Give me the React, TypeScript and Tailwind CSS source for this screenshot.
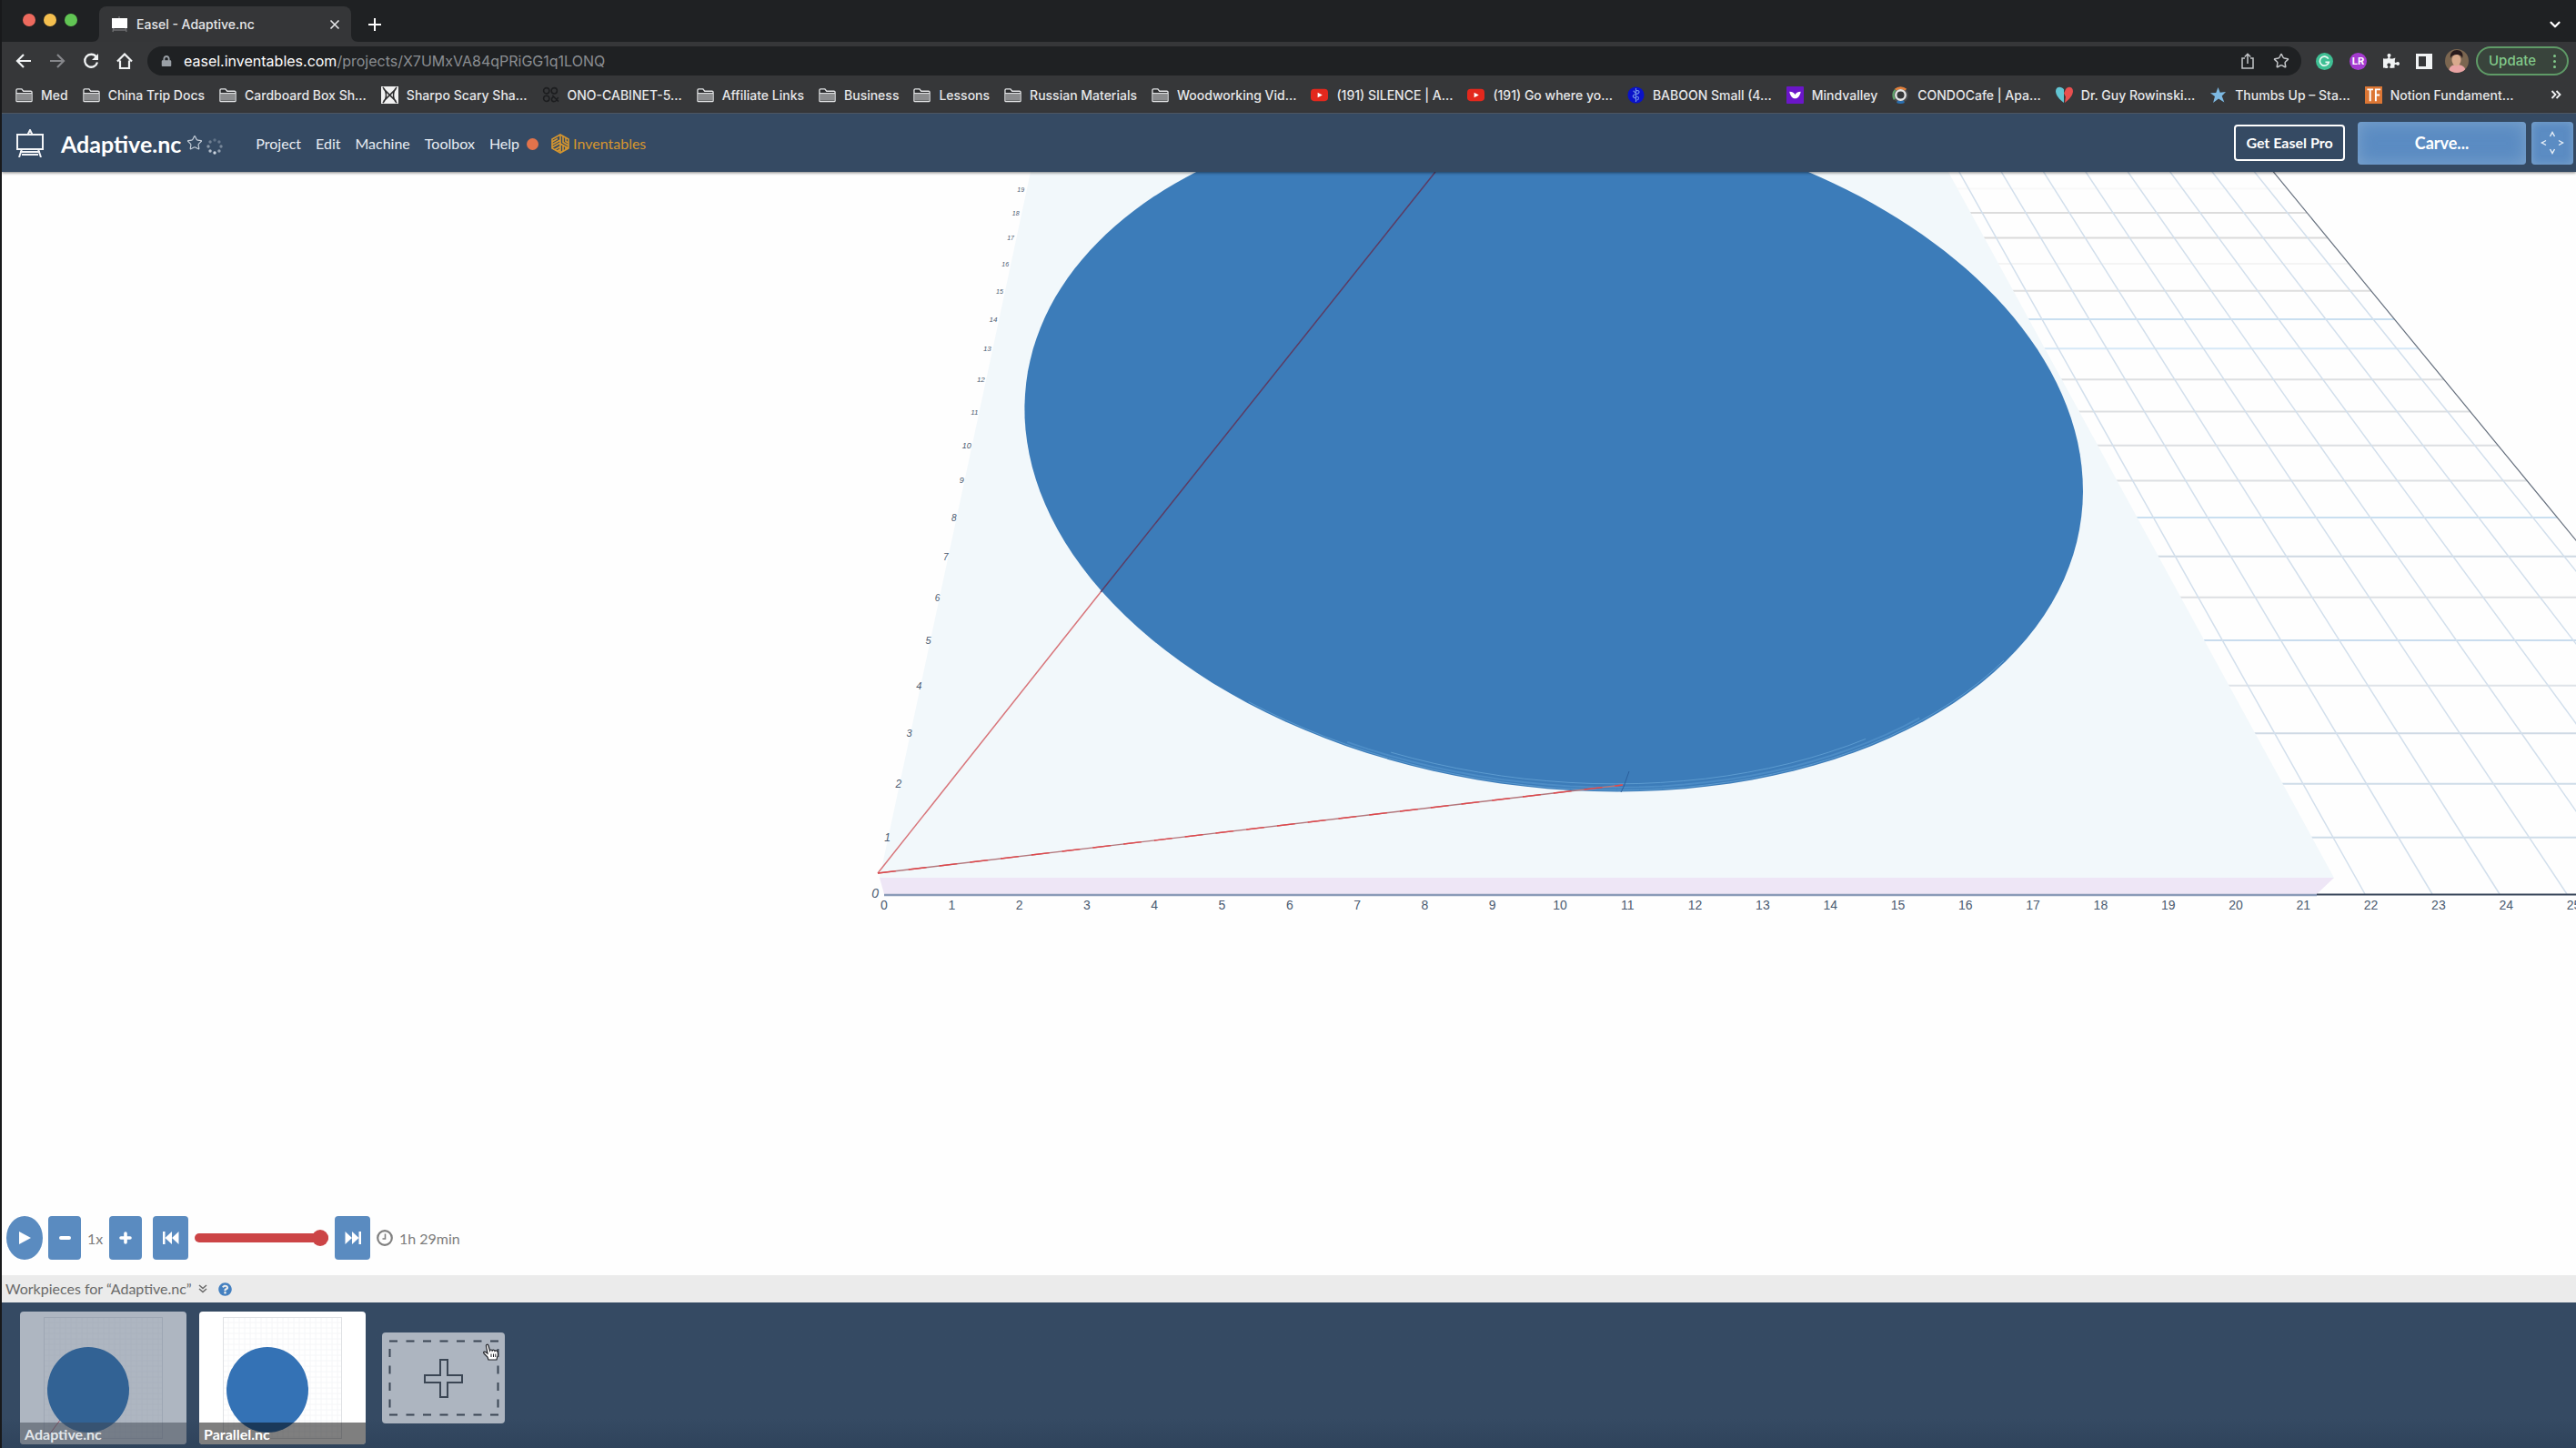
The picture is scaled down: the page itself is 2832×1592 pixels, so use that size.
/**
 * @fileoverview Easel project page shown inside a browser window.
 */

import React from 'react';
import { FaPuzzlePiece, FaLock, FaQuestionCircle } from 'react-icons/fa';
import { ChevronDown, Star } from 'lucide-react';

/* ------------------------------------------------------------------ */
/* Bookmarks                                                           */
/* ------------------------------------------------------------------ */

type BookmarkKind =
  | 'folder'
  | 'sharpo'
  | 'ono'
  | 'youtube'
  | 'baboon'
  | 'mindvalley'
  | 'condo'
  | 'heart'
  | 'star'
  | 'tf';

const BOOKMARKS: { kind: BookmarkKind; label: string }[] = [
  { kind: 'folder', label: 'Med' },
  { kind: 'folder', label: 'China Trip Docs' },
  { kind: 'folder', label: 'Cardboard Box Sh...' },
  { kind: 'sharpo', label: 'Sharpo Scary Sha...' },
  { kind: 'ono', label: 'ONO-CABINET-5...' },
  { kind: 'folder', label: 'Affiliate Links' },
  { kind: 'folder', label: 'Business' },
  { kind: 'folder', label: 'Lessons' },
  { kind: 'folder', label: 'Russian Materials' },
  { kind: 'folder', label: 'Woodworking Vid...' },
  { kind: 'youtube', label: '(191) SILENCE | A...' },
  { kind: 'youtube', label: '(191) Go where yo...' },
  { kind: 'baboon', label: 'BABOON Small (4...' },
  { kind: 'mindvalley', label: 'Mindvalley' },
  { kind: 'condo', label: 'CONDOCafe | Apa...' },
  { kind: 'heart', label: 'Dr. Guy Rowinski...' },
  { kind: 'star', label: 'Thumbs Up – Sta...' },
  { kind: 'tf', label: 'Notion Fundament...' },
];

const BookmarkIcon: React.FC<{ kind: BookmarkKind }> = ({ kind }) => (
  <svg className="size-[19px] shrink-0" viewBox="0 0 20 20" aria-hidden="true">
    {kind === 'folder' && (
      <>
        <path d="M1 16.5V4.2C1 3.4 1.500 3 2.200 3h5l2 2.500h8.600c.8 0 1.200.5 1.200 1.200v9.800c0 .6-.4 1-1 1H2c-.6 0-1-.4-1-1z" fill="#2d2e30" stroke="#e4e5e7" strokeWidth="1.400" />
        <path d="M2 8.500h16v8H2z" fill="#8b8c8e" />
        <path d="M1 8h18" stroke="#e4e5e7" strokeWidth="1.200" />
      </>
    )}
    {kind === 'sharpo' && (
      <>
        <rect width="20" height="20" fill="#f1f1f1" />
        <path d="M2 1c5 5 5 13 0 18M18 1c-5 5-5 13 0 18M3 3l14 14M17 3L3 17" fill="none" stroke="#2b2b2d" strokeWidth="1.600" />
      </>
    )}
    {kind === 'ono' && (
      <g fill="none" stroke="#1c1d1f" strokeWidth="1.600">
        <circle cx="5" cy="5" r="3.300" />
        <circle cx="14" cy="5" r="3.300" />
        <circle cx="5" cy="14" r="3.300" />
        <path d="M19 17.500L12 10.500M18.500 12.500c-1 3-3 5-5 5-3 0-3.500-4-.5-5" />
      </g>
    )}
    {kind === 'youtube' && (
      <>
        <rect x="0" y="3" width="20" height="14" rx="4" fill="#e3281d" />
        <path d="M8 7l5.500 3L8 13z" fill="#fff" />
      </>
    )}
    {kind === 'baboon' && (
      <>
        <circle cx="10" cy="10" r="9.500" fill="#0a12c9" />
        <path d="M10 2v16M10 5c5-1 5 3 0 4M10 9c-5 1-4 4 0 4.500M10 12c4-1 4 3 1 4M7 5l3 3" fill="none" stroke="#6f8fe6" strokeWidth="1.200" />
      </>
    )}
    {kind === 'mindvalley' && (
      <>
        <rect width="20" height="20" rx="1" fill="#6b16c9" />
        <path d="M3.500 6c3 0 5 1 6.500 3.500C11.500 7 13.500 6 16.500 6c-.5 4-3 8-6.500 8S4 10 3.500 6z" fill="#fff" />
      </>
    )}
    {kind === 'condo' && (
      <>
        <circle cx="10" cy="10" r="9" fill="#4c4d50" />
        <path d="M4 4a9 9 0 0 1 12 0" fill="none" stroke="#e2803c" strokeWidth="3" />
        <path d="M4 4a9 9 0 0 0-1 11" fill="none" stroke="#5fa36a" strokeWidth="2.500" />
        <path d="M6 17.500a9 9 0 0 0 8 0" fill="none" stroke="#2a6fb0" strokeWidth="3" />
        <circle cx="10" cy="10" r="5.500" fill="#353638" stroke="#e6e6e6" strokeWidth="2.500" />
      </>
    )}
    {kind === 'heart' && (
      <>
        <path d="M9.500 19C4 15 0 10 0 5.500c0-6 7-6 9.500-2z" fill="#62c5d3" />
        <path d="M10.500 19C16 15 20 10 20 5.500c0-6-7-6-8.500-2L9.500 8l2 4z" fill="#e84f4f" />
      </>
    )}
    {kind === 'star' && (
      <path d="M10 1l2.300 6.200 6.700-.9-4.600 4.700 2.800 7.500-6.700-4.200L4.300 19l2-7.300L1 7.500l6.600-.2z" fill="#7db9e3" />
    )}
    {kind === 'tf' && (
      <>
        <rect width="20" height="20" fill="#dc7634" />
        <path d="M2.500 3.500h7M6 3.500v13.500M12.500 17V3.500h5.500M12.500 10H17" fill="none" stroke="#fff" strokeWidth="2" />
      </>
    )}
  </svg>
);

/* ------------------------------------------------------------------ */
/* Browser chrome                                                      */
/* ------------------------------------------------------------------ */

const TabStrip: React.FC = () => (
  <div className="flex h-[46px] items-end bg-[#1f2123] pl-[23px] pr-3.5">
    <div className="flex h-full w-[76px] items-center gap-[9px] pb-0.5">
      <button aria-label="Close window" className="size-3.5 rounded-full bg-[#ed6a5e]" />
      <button aria-label="Minimize window" className="size-3.5 rounded-full bg-[#f4bf4f]" />
      <button aria-label="Zoom window" className="size-3.5 rounded-full bg-[#61c554]" />
    </div>
    <svg className="size-2 shrink-0" viewBox="0 0 8 8" aria-hidden="true">
      <path d="M8 0v8H0c5 0 8-3 8-8z" fill="#353638" />
    </svg>
    <div className="flex h-[39px] w-[277px] items-center rounded-t-lg bg-[#353638] pl-[13px] pr-3">
      <svg className="h-[18px] w-[19px]" viewBox="0 0 19 18" aria-hidden="true">
        <path d="M3 12l-1 5M16 12l1 5M3 15h13M9 0v2" stroke="#6d6e70" strokeWidth="1.500" />
        <rect x="1" y="2" width="17" height="11" fill="#fff" />
      </svg>
      <span className="ml-[9px] flex-1 text-[14px] font-medium text-[#e6e7e9]">Easel - Adaptive.nc</span>
      <button aria-label="Close tab" className="size-3">
        <svg viewBox="0 0 12 12" stroke="#e6e7e9" strokeWidth="1.600">
          <path d="M1.500 1.500l9 9M10.500 1.500l-9 9" />
        </svg>
      </button>
    </div>
    <svg className="size-2 shrink-0" viewBox="0 0 8 8" aria-hidden="true">
      <path d="M0 0v8h8C3 8 0 5 0 0z" fill="#353638" />
    </svg>
    <button aria-label="New tab" className="mb-3 ml-[11px] size-3.5">
      <svg viewBox="0 0 14 14" stroke="#fff" strokeWidth="2">
        <path d="M7 0v14M0 7h14" />
      </svg>
    </button>
    <button aria-label="Search tabs" className="mb-2.5 ml-auto">
      <ChevronDown className="size-[18px] text-white" strokeWidth={3} />
    </button>
  </div>
);

const Toolbar: React.FC = () => (
  <div className="flex h-[42px] items-center bg-[#363739] pl-[15px] pr-2">
    <div className="flex items-center gap-[19px] text-[#e8eaed]">
      <button aria-label="Back" className="size-[18px]">
        <svg viewBox="0 0 18 18" fill="none" stroke="#f1f3f4" strokeWidth="2.200">
          <path d="M17 9H2M9 2L2 9l7 7" />
        </svg>
      </button>
      <button aria-label="Forward" className="size-[18px]">
        <svg viewBox="0 0 18 18" fill="none" stroke="#85868a" strokeWidth="2.200">
          <path d="M1 9h15M9 2l7 7-7 7" />
        </svg>
      </button>
      <button aria-label="Reload" className="size-[18px]">
        <svg viewBox="0 0 18 18" fill="none" stroke="#f1f3f4" strokeWidth="2.300">
          <path d="M14.800 4.500A7 7 0 1 0 16 10.500" />
          <path d="M17 1v7h-7z" fill="#f1f3f4" stroke="none" />
        </svg>
      </button>
      <button aria-label="Home" className="size-[18px]">
        <svg viewBox="0 0 18 18" fill="none" stroke="#f1f3f4" strokeWidth="2.200">
          <path d="M4 8.500V17h10V8.500M1 9.500L9 1.500l8 8" />
        </svg>
      </button>
    </div>
    <div className="ml-4 flex h-8 flex-1 items-center rounded-full bg-[#1f2123] pl-[15px] pr-[13px]">
      <FaLock className="size-3 text-[#9aa0a6]" />
      <a href="#address" className="ml-[13px] flex-1 text-[16px] text-[#8b8e92]">
        <span className="text-white">easel.inventables.com</span>/projects/X7UMxVA84qPRiGG1q1LONQ
      </a>
      <button aria-label="Share" className="h-[18px] w-4">
        <svg viewBox="0 0 16 18" fill="none" stroke="#c4c6c9" strokeWidth="1.500">
          <path d="M5 6H2v11h12V6h-3M8 12V1.500M4.800 4.500L8 1.300l3.200 3.200" />
        </svg>
      </button>
      <button aria-label="Bookmark this page" className="ml-5">
        <Star className="size-[18px] text-[#c4c6c9]" />
      </button>
    </div>
    <div className="ml-4 flex items-center gap-[18px]">
      <button aria-label="Grammarly" className="size-[19px]">
        <svg viewBox="0 0 20 20">
          <circle cx="10" cy="10" r="10" fill="#3fbf94" />
          <path d="M14.500 7A5.300 5.300 0 1 0 15 11h-4" fill="none" stroke="#eafaf4" strokeWidth="1.800" />
        </svg>
      </button>
      <button aria-label="LR" className="flex size-[19px] items-center justify-center rounded-full bg-[#a43bd0] text-[11px] font-bold leading-none text-white">
        LR
      </button>
      <button aria-label="Extensions">
        <FaPuzzlePiece className="size-[18px] text-[#f1f3f4]" />
      </button>
      <button aria-label="Side panel" className="flex h-[17px] w-[18px] justify-end border-[3px] border-[#f1f3f4]">
        <span className="h-full w-1 bg-[#f1f3f4]" />
      </button>
      <button aria-label="Profile" className="-ml-1 size-[26px] overflow-hidden rounded-full">
        <svg viewBox="0 0 26 26">
          <rect width="26" height="26" fill="#7b6650" />
          <path d="M4 26c0-7 4-9 9-9s10 2 10 9z" fill="#e9a3a4" />
          <ellipse cx="12.500" cy="12" rx="5" ry="6.500" fill="#d8a98d" />
          <path d="M6 10c-1-6 3-9 7-9s8 3 6 9c-1-3-3-4-6-4s-6 1-7 4z" fill="#271a1c" />
        </svg>
      </button>
    </div>
    <button className="ml-2 flex h-8 w-[102px] items-center justify-between rounded-full border-2 border-[#5f9b67] bg-[#39443c] px-3 text-[15px] font-medium text-[#82c98a]">
      Update
      <span className="flex flex-col gap-[3px]">
        <span className="size-[3px] rounded-full bg-[#82c98a]" />
        <span className="size-[3px] rounded-full bg-[#82c98a]" />
        <span className="size-[3px] rounded-full bg-[#82c98a]" />
      </span>
    </button>
  </div>
);

const BookmarksBar: React.FC = () => (
  <nav aria-label="Bookmarks" className="flex h-[37px] items-center gap-4 overflow-hidden border-b border-[#56606b] bg-[#363739] pb-1 pl-[15px] pr-4">
    {BOOKMARKS.map(({ kind, label }) => (
      <a key={label} href="#bookmark" className="flex shrink-0 items-center gap-[9px] whitespace-nowrap text-[14px] font-medium text-[#e6e7e9]">
        <BookmarkIcon kind={kind} />
        {label}
      </a>
    ))}
    <button aria-label="More bookmarks" className="ml-auto size-3">
      <svg viewBox="0 0 12 12" fill="none" stroke="#f1f3f4" strokeWidth="1.800">
        <path d="M1.500 2l4 4-4 4M6.500 2l4 4-4 4" />
      </svg>
    </button>
  </nav>
);

/* ------------------------------------------------------------------ */
/* Easel header                                                        */
/* ------------------------------------------------------------------ */

const SPINNER_OPACITY = [0.25, 0.3, 0.4, 0.55, 0.9, 0.75, 0.5, 0.35];

const EaselHeader: React.FC = () => (
  <header className="relative z-10 flex h-16 items-center bg-[#354a63] pl-4 pr-[3px] font-['Lato',sans-serif] text-[#e8edf3] shadow-[0_1px_3px_rgba(0,0,0,0.5)]">
    <svg className="h-[31px] w-[30px]" viewBox="0 0 30 31" fill="none" stroke="#f2f4f7" strokeWidth="2" aria-hidden="true">
      <path d="M1 6h28v16H1zM12.500 6L15 1l2.500 5M4 25h22M6 22l-3 9M24 22l3 9M6 28h18" />
    </svg>
    <h1 className="ml-[19px] pt-0.5 text-[25px] font-bold leading-none text-white">Adaptive.nc</h1>
    <button aria-label="Favorite" className="ml-1.5">
      <Star className="size-[18px] text-[#c6cfda]" strokeWidth={1.600} />
    </button>
    <svg className="ml-1 mt-2 size-[18px]" viewBox="0 0 18 18" aria-hidden="true">
      {SPINNER_OPACITY.map((opacity, i) => (
        <circle
          key={i}
          cx={9 + 7 * Math.sin((i * Math.PI) / 4)}
          cy={9 - 7 * Math.cos((i * Math.PI) / 4)}
          r="1.700"
          fill="#dfe6ee"
          opacity={opacity}
        />
      ))}
    </svg>
    <nav className="ml-9 flex items-center gap-4 pt-0.5 text-[16px]">
      <button>Project</button>
      <button>Edit</button>
      <button>Machine</button>
      <button>Toolbox</button>
      <button className="flex items-center gap-2">
        Help
        <span className="size-[13px] rounded-full bg-[#e2734b]" />
      </button>
      <a href="#inventables" className="-ml-0.5 flex items-center gap-1 text-[#d6962f]">
        <svg className="h-[22px] w-5" viewBox="0 0 20 22" fill="none" stroke="#d6962f" strokeWidth="1.600" aria-hidden="true">
          <path d="M10 1l9 5v10l-9 5-9-5V6z" />
          <path d="M10 1v10l9 5M10 11v10M13 2.500v7L19 13M16 4.500v4l3 1.500M1 9l6-3.500M1 12l9-5M1 15l9-5M4 17.500l6-3.500M7 19l3-2M13 13v6M16 15v3" />
        </svg>
        Inventables
      </a>
    </nav>
    <div className="ml-auto flex items-center">
      <button className="h-10 w-[122px] rounded-sm border-2 border-white text-[16px] font-bold text-white">Get Easel Pro</button>
      <button className="ml-3.5 h-[47px] w-[185px] rounded-sm bg-[#5b8cc3] text-[18px] font-bold text-white shadow-[inset_0_0_18px_rgba(160,190,215,0.5)]">
        Carve...
      </button>
      <button aria-label="Jog machine" className="ml-1.5 flex h-[47px] w-[46px] items-center justify-center rounded-sm bg-[#5b8cc3] shadow-[inset_0_0_10px_rgba(160,190,215,0.5)]">
        <svg className="size-[26px]" viewBox="0 0 26 26" fill="none" stroke="#e8eff7" strokeWidth="1.400">
          <path d="M10.500 6L13 1.500 15.500 6M10.500 20l2.500 4.500 2.500-4.500M6 10.500L1.500 13 6 15.500M20 10.500l4.500 2.500-4.500 2.500" />
        </svg>
      </button>
    </div>
  </header>
);

/* ------------------------------------------------------------------ */
/* 3D preview                                                          */
/* ------------------------------------------------------------------ */

const AXIS_Y = 794;
const ORIGIN_X = 972;
const VANISH_X = 1405;
const DEPTH = 2127;
const UNIT = 74;

/** Projects a point of the bed (in inches) onto the preview. */
const project = (x: number, y: number): [number, number] => {
  const w = 1 + 0.0302 * y;
  return [VANISH_X + (ORIGIN_X - VANISH_X + UNIT * x) / w, AXIS_Y - DEPTH + DEPTH / w];
};

/** Outline of a circular cut, as an SVG point list. */
const arc = (r: number, from = 0, to = 360) => {
  const points: string[] = [];
  for (let a = from; a <= to; a += 2) {
    const rad = (a * Math.PI) / 180;
    const [px, py] = project(11.17 + r * Math.cos(rad), 12.26 + r * Math.sin(rad));
    points.push(`${px.toFixed(1)},${py.toFixed(1)}`);
  }
  return points.join(' ');
};

const ROW_COLORS = [
  '#cfdde9', '#cfdde9', '#cfdae5', '#dfe3e8', '#c9dcee', '#dddfe2', '#cfd9e3', '#c9dff0', '#dcdfe2', '#dcdfe2',
  '#dddfe1', '#dddfe1', '#d6e8f6', '#c9dff0', '#dedede', '#f4f4f4', '#dadada', '#dcdcdc', '#f8f8f8',
];

const Y_LABEL_SIZES = [
  'text-[14px]', 'text-[12px]', 'text-[12px]', 'text-[11px]', 'text-[11px]', 'text-[11px]', 'text-[10px]',
  'text-[10px]', 'text-[10px]', 'text-[9px]', 'text-[9px]', 'text-[8px]', 'text-[8px]', 'text-[8px]',
  'text-[8px]', 'text-[7px]', 'text-[7px]', 'text-[7px]', 'text-[7px]', 'text-[7px]',
];

const Preview: React.FC = () => {
  const [edgeTopX, edgeTopY] = project(29.45, 21);
  const [edgeX, edgeY] = project(29.45, 0);

  return (
    <svg className="h-full w-full bg-[#fefefe]" viewBox="2 0 2830 1213" preserveAspectRatio="xMinYMin slice" role="img" aria-label="Toolpath preview">
      {/* Bed grid */}
      {ROW_COLORS.map((color, i) => {
        const [x1, y] = project(20, i + 1);
        const [x2] = project(29.45, i + 1);
        return <line key={i} x1={x1} y1={y} x2={x2} y2={y} stroke={color} strokeWidth="2" />;
      })}
      {[22, 23, 24, 25, 26, 27, 28, 29].map((k) => {
        const [x1, y1] = project(k, 0);
        const [x2, y2] = project(k, 21);
        return <line key={k} x1={x1} y1={y1} x2={x2} y2={y2} stroke="#d2dfec" strokeWidth="1.500" />;
      })}
      <line x1={edgeX} y1={edgeY} x2={edgeTopX} y2={edgeTopY} stroke="#66707e" strokeWidth="1.200" />

      {/* Material */}
      <path d="M967 776L1133 0H2142L2566 776z" fill="#f2f8fb" />
      <path d="M967 776H2566L2547 794H972z" fill="#eee6f6" />
      <path d="M972 795H2547" stroke="#8a9bb8" strokeWidth="2.500" />
      <path d="M2547 794.500H2832" stroke="#39465a" strokeWidth="2" />

      {/* Carved disc, with the passes showing along its near edge */}
      <polygon points={arc(10.41)} fill="#3c7cb9" />
      <g fill="none" stroke="#5c9bd0" strokeWidth="1">
        <polyline points={arc(10.38, 236, 312)} />
        <polyline points={arc(10.33, 246, 300)} stroke="#4c8cc6" strokeWidth="2" />
        <polyline points={arc(10.26, 250, 294)} />
      </g>
      <path d="M1791 659L1785 676L1782 682" fill="none" stroke="#2b5f9c" strokeWidth="1" />

      {/* Rapid moves */}
      <path d="M965 771L1210 462" stroke="#d8757a" strokeWidth="1.500" />
      <path d="M1210 462L1578 0" stroke="#5c3c63" strokeWidth="1.500" />
      <path d="M965 771L1784 674" stroke="#b3777c" strokeWidth="1.400" />
      <path d="M965 771L1784 674" stroke="#e0474b" strokeWidth="1.400" strokeDasharray="20 14" />

      {/* Axis labels */}
      <g className="fill-[#4a5a70] font-['Liberation_Sans',sans-serif]">
        {Array.from({ length: 26 }, (_, k) => (
          <text key={k} x={972 + 74.3 * k} y="811" textAnchor="middle" className="text-[14px]">
            {k}
          </text>
        ))}
        {Y_LABEL_SIZES.map((size, n) => {
          const [x, y] = project(-0.08, n);
          return (
            <text key={n} x={x} y={y + (n < 9 ? 4 : 3)} textAnchor="end" className={`${size} italic`}>
              {n}
            </text>
          );
        })}
      </g>
    </svg>
  );
};

/* ------------------------------------------------------------------ */
/* Playback controls                                                   */
/* ------------------------------------------------------------------ */

const Playback: React.FC = () => (
  <div className="absolute bottom-[17px] left-[5px] flex items-center font-['Lato',sans-serif] text-[16px] text-[#7d7d7d]">
    <button aria-label="Play" className="flex h-12 w-10 items-center justify-center rounded-[50%] bg-[#5a8bc0]">
      <svg className="h-[14px] w-[13px]" viewBox="0 0 13 14" fill="#fff">
        <path d="M0 0l13 7-13 7z" />
      </svg>
    </button>
    <button aria-label="Slower" className="ml-1.5 flex h-12 w-9 items-center justify-center rounded-sm bg-[#5a8bc0]">
      <span className="h-1 w-[13px] rounded-sm bg-white" />
    </button>
    <span className="w-[31px] pt-0.5 text-center">1x</span>
    <button aria-label="Faster" className="flex h-12 w-9 items-center justify-center rounded-sm bg-[#5a8bc0]">
      <svg className="size-[14px]" viewBox="0 0 14 14" stroke="#fff" strokeWidth="3.600" strokeLinecap="round">
        <path d="M7 2v10M2 7h10" />
      </svg>
    </button>
    <button aria-label="Skip to start" className="ml-3 flex h-12 w-[39px] items-center justify-center rounded-sm bg-[#5a8bc0]">
      <svg className="h-[14px] w-[18px]" viewBox="0 0 18 14" fill="#fff">
        <path d="M0 0h2.500v14H0zM10 0v14L2.500 7zM17.500 0v14L10 7z" />
      </svg>
    </button>
    <input
      type="range"
      aria-label="Playback position"
      defaultValue={100}
      className="mx-[7px] h-[18px] w-[147px] appearance-none bg-transparent [&::-webkit-slider-runnable-track]:h-2.5 [&::-webkit-slider-runnable-track]:rounded-full [&::-webkit-slider-runnable-track]:bg-[#cc4446] [&::-webkit-slider-thumb]:-mt-1 [&::-webkit-slider-thumb]:size-[18px] [&::-webkit-slider-thumb]:appearance-none [&::-webkit-slider-thumb]:rounded-full [&::-webkit-slider-thumb]:bg-[#cc4446]"
    />
    <button aria-label="Skip to end" className="flex h-12 w-[39px] items-center justify-center rounded-sm bg-[#5a8bc0]">
      <svg className="h-[14px] w-[18px]" viewBox="0 0 18 14" fill="#fff">
        <path d="M.5 0v14L8 7zM8 0v14l7.500-7zM15.500 0H18v14h-2.500z" />
      </svg>
    </button>
    <svg className="ml-[7px] size-[18px]" viewBox="0 0 18 18" fill="none" stroke="#808080" aria-hidden="true">
      <circle cx="9" cy="9" r="7.800" strokeWidth="2.200" />
      <path d="M9.500 4.500V10H6.500" strokeWidth="1.600" />
    </svg>
    <span className="ml-[7px] pt-0.5">1h 29min</span>
  </div>
);

/* ------------------------------------------------------------------ */
/* Workpieces                                                          */
/* ------------------------------------------------------------------ */

const Workpiece: React.FC<{ name: string; selected?: boolean }> = ({ name, selected }) => (
  <button className="relative block h-[146px] w-[183px] overflow-hidden rounded">
    <svg className="h-full w-full" viewBox="0 0 183 146" aria-hidden="true">
      <rect width="183" height="146" fill={selected ? '#aeb6c1' : '#fff'} />
      <g stroke={selected ? '#aab2be' : '#f5f6f8'} strokeWidth="1">
        {Array.from({ length: 21 }, (_, i) => (
          <path key={`v${i}`} d={`M${32 + i * 6} 6v134`} />
        ))}
        {Array.from({ length: 22 }, (_, i) => (
          <path key={`h${i}`} d={`M26 ${12 + i * 6}h131`} />
        ))}
      </g>
      <rect x="26.500" y="6.500" width="130" height="133" fill="none" stroke={selected ? '#9ea7b4' : '#dfe1e4'} />
      {selected && <path d="M30 138L60 98" stroke="#a25a6c" />}
      <ellipse cx="75" cy="86" rx="45" ry="47" fill={selected ? '#326294' : '#3472b5'} />
    </svg>
    <span className={`absolute inset-x-0 bottom-0 h-6 pl-[5px] pt-px text-left text-[16px] font-bold leading-[24px] ${selected ? 'bg-[#3c4450]/50 text-[#e2e6ea]' : 'bg-black/50 text-white'}`}>
      {name}
    </span>
  </button>
);

const Workpieces: React.FC = () => (
  <section className="font-['Lato',sans-serif]">
    <div className="flex h-[30px] items-center bg-[#ebebeb] pl-1 text-[16px] text-[#6a6a6a]">
      <h2>Workpieces for “Adaptive.nc”</h2>
      <svg className="ml-[7px] size-[10px]" viewBox="0 0 10 10" fill="none" stroke="#6a6a6a" strokeWidth="1.500" aria-hidden="true">
        <path d="M1 1l4 3.500L9 1M1 5l4 3.500L9 5" />
      </svg>
      <button aria-label="Help with workpieces" className="ml-3">
        <FaQuestionCircle className="size-[15px] text-[#4480c0]" />
      </button>
    </div>
    <div className="flex h-[160px] items-center bg-gradient-to-b from-[#354a63] from-80% to-[#2f435b] pb-1 pl-5 pt-2.5">
      <Workpiece name="Adaptive.nc" selected />
      <div className="ml-3.5">
        <Workpiece name="Parallel.nc" />
      </div>
      <button aria-label="Add workpiece" className="relative ml-[18px] h-[100px] w-[135px] rounded bg-[#adb5c0]">
        <svg className="h-full w-full" viewBox="0 0 135 100" fill="none" stroke="#3b4654" strokeWidth="2">
          <path d="M8 9.500h120M8 90.500h120" strokeDasharray="9 9.500" />
          <path d="M8.500 18v68M127.500 18v68" strokeDasharray="9 9.500" />
          <path d="M64 30h8v17h16v8H72v16h-8V55H47v-8h17z" />
        </svg>
        <svg className="absolute right-1.5 top-3 h-[19px] w-[18px]" viewBox="0 0 18 19" fill="#fff" stroke="#1d1f24" strokeWidth="1.200" aria-hidden="true">
          <path d="M6 18l-1-3-4-4c-1-1.500.5-2.500 2-1.500L5 11 3.500 3C3.200 1 5.500.5 6 2.500L7.500 8c.5-1.500 2.500-1.200 2.700 0 .8-1.300 2.600-.8 2.800.4.8-1 2.800-.6 3 .6.5 2 1.300 4.500-.5 6.500l-.5 2.500z" />
          <path d="M9 11.500v3.500M11.500 11.500v3.500M13.800 11.500v3.500" strokeWidth="1" />
        </svg>
      </button>
    </div>
  </section>
);

const App: React.FC = () => (
  <div className="flex h-screen flex-col overflow-hidden border-l-2 border-[#18191b] bg-white font-['Inter','Liberation_Sans',sans-serif]">
    <TabStrip />
    <Toolbar />
    <BookmarksBar />
    <EaselHeader />
    <main className="relative min-h-0 flex-1">
      <Preview />
      <Playback />
    </main>
    <Workpieces />
  </div>
);

export default App;
